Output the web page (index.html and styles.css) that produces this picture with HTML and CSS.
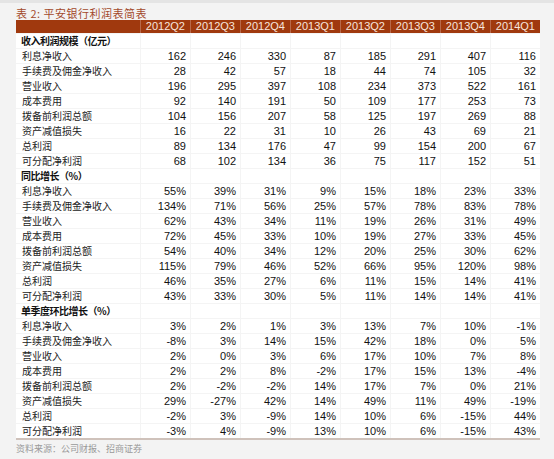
FILE: index.html
```html
<!doctype html>
<html>
<head>
  <link rel="stylesheet" href="styles.css">
</head>
<body>
  <div class="page">
    <div class="title">表 2: 平安银行利润表简表</div>
    <table class="sheet">
      <colgroup>
        <col class="c-label">
        <col><col><col><col><col><col><col><col>
      </colgroup>
      <thead>
        <tr>
          <th class="blank"></th>
          <th>2012Q2</th><th>2012Q3</th><th>2012Q4</th><th>2013Q1</th>
          <th>2013Q2</th><th>2013Q3</th><th>2013Q4</th><th>2014Q1</th>
        </tr>
      </thead>
      <tbody>
        <tr class="group"><td>收入利润规模（亿元）</td><td></td><td></td><td></td><td></td><td></td><td></td><td></td><td></td></tr>
        <tr><td>利息净收入</td><td>162</td><td>246</td><td>330</td><td>87</td><td>185</td><td>291</td><td>407</td><td>116</td></tr>
        <tr><td>手续费及佣金净收入</td><td>28</td><td>42</td><td>57</td><td>18</td><td>44</td><td>74</td><td>105</td><td>32</td></tr>
        <tr><td>营业收入</td><td>196</td><td>295</td><td>397</td><td>108</td><td>234</td><td>373</td><td>522</td><td>161</td></tr>
        <tr><td>成本费用</td><td>92</td><td>140</td><td>191</td><td>50</td><td>109</td><td>177</td><td>253</td><td>73</td></tr>
        <tr><td>拨备前利润总额</td><td>104</td><td>156</td><td>207</td><td>58</td><td>125</td><td>197</td><td>269</td><td>88</td></tr>
        <tr><td>资产减值损失</td><td>16</td><td>22</td><td>31</td><td>10</td><td>26</td><td>43</td><td>69</td><td>21</td></tr>
        <tr><td>总利润</td><td>89</td><td>134</td><td>176</td><td>47</td><td>99</td><td>154</td><td>200</td><td>67</td></tr>
        <tr><td>可分配净利润</td><td>68</td><td>102</td><td>134</td><td>36</td><td>75</td><td>117</td><td>152</td><td>51</td></tr>

        <tr class="group"><td>同比增长（%）</td><td></td><td></td><td></td><td></td><td></td><td></td><td></td><td></td></tr>
        <tr><td>利息净收入</td><td>55%</td><td>39%</td><td>31%</td><td>9%</td><td>15%</td><td>18%</td><td>23%</td><td>33%</td></tr>
        <tr><td>手续费及佣金净收入</td><td>134%</td><td>71%</td><td>56%</td><td>25%</td><td>57%</td><td>78%</td><td>83%</td><td>78%</td></tr>
        <tr><td>营业收入</td><td>62%</td><td>43%</td><td>34%</td><td>11%</td><td>19%</td><td>26%</td><td>31%</td><td>49%</td></tr>
        <tr><td>成本费用</td><td>72%</td><td>45%</td><td>33%</td><td>10%</td><td>19%</td><td>27%</td><td>33%</td><td>45%</td></tr>
        <tr><td>拨备前利润总额</td><td>54%</td><td>40%</td><td>34%</td><td>12%</td><td>20%</td><td>25%</td><td>30%</td><td>62%</td></tr>
        <tr><td>资产减值损失</td><td>115%</td><td>79%</td><td>46%</td><td>52%</td><td>66%</td><td>95%</td><td>120%</td><td>98%</td></tr>
        <tr><td>总利润</td><td>46%</td><td>35%</td><td>27%</td><td>6%</td><td>11%</td><td>15%</td><td>14%</td><td>41%</td></tr>
        <tr><td>可分配净利润</td><td>43%</td><td>33%</td><td>30%</td><td>5%</td><td>11%</td><td>14%</td><td>14%</td><td>41%</td></tr>

        <tr class="group"><td>单季度环比增长（%）</td><td></td><td></td><td></td><td></td><td></td><td></td><td></td><td></td></tr>
        <tr><td>利息净收入</td><td>3%</td><td>2%</td><td>1%</td><td>3%</td><td>13%</td><td>7%</td><td>10%</td><td>-1%</td></tr>
        <tr><td>手续费及佣金净收入</td><td>-8%</td><td>3%</td><td>14%</td><td>15%</td><td>42%</td><td>18%</td><td>0%</td><td>5%</td></tr>
        <tr><td>营业收入</td><td>2%</td><td>0%</td><td>3%</td><td>6%</td><td>17%</td><td>10%</td><td>7%</td><td>8%</td></tr>
        <tr><td>成本费用</td><td>2%</td><td>2%</td><td>8%</td><td>-2%</td><td>17%</td><td>15%</td><td>13%</td><td>-4%</td></tr>
        <tr><td>拨备前利润总额</td><td>2%</td><td>-2%</td><td>-2%</td><td>14%</td><td>17%</td><td>7%</td><td>0%</td><td>21%</td></tr>
        <tr><td>资产减值损失</td><td>29%</td><td>-27%</td><td>42%</td><td>14%</td><td>49%</td><td>11%</td><td>49%</td><td>-19%</td></tr>
        <tr><td>总利润</td><td>-2%</td><td>3%</td><td>-9%</td><td>14%</td><td>10%</td><td>6%</td><td>-15%</td><td>44%</td></tr>
        <tr><td>可分配净利润</td><td>-3%</td><td>4%</td><td>-9%</td><td>13%</td><td>10%</td><td>6%</td><td>-15%</td><td>43%</td></tr>
      </tbody>
    </table>
    <div class="source">资料来源：公司财报、招商证券</div>
  </div>
</body>
</html>
```

FILE: styles.css
```css
body{
  margin: 0;
  background-color: #f3f3f3;
  font-family: "Liberation Sans", "Noto Sans CJK SC", sans-serif;
}
.page{
  border-top: 3px solid #e4e4e4;
  padding: 0 14px 0 16px;
}
.title{
  height: 17px;
  line-height: 20px;
  font-size: 11px;
  color: #a34a2c;
  font-family: "Noto Sans CJK SC", sans-serif;
  letter-spacing: 0.5px;
  overflow: hidden;
}
.sheet{
  width: 524px;
  table-layout: fixed;
  border-collapse: separate;
  border-spacing: 0;
  background-color: #fff;
  border-bottom: 2px solid #cfc2bb;
}
.sheet col{
  width: 50px;
}
.sheet col.c-label{
  width: 124px;
}
.sheet th{
  height: 13px;
  padding: 0 5px 0 0;
  background-color: #a0390e;
  color: #f7e4dc;
  font-size: 11px;
  font-weight: normal;
  text-align: right;
  line-height: 13px;
  border-left: 1px solid #b8684a;
}
.sheet th.blank{
  border-left: none;
}
.sheet td{
  height: 14px;
  padding: 0 4px 0 0;
  font-size: 11px;
  line-height: 14px;
  color: #111;
  text-align: right;
  border-left: 1px solid #f4f4f4;
  border-top: 1px solid #f4f4f4;
  white-space: nowrap;
  overflow: hidden;
}
.sheet td:first-child{
  text-align: left;
  padding-left: 6px;
  border-left: none;
  font-size: 10px;
  color: #222;
  font-family: "Noto Sans CJK SC", sans-serif;
}
.sheet tr.group td:first-child{
  padding-left: 5px;
  font-weight: bold;
  letter-spacing: -0.5px;
  color: #111;
}
.source{
  padding: 2px 0 0 0;
  line-height: 14px;
  font-size: 9px;
  color: #9a9a9a;
  font-family: "Noto Sans CJK SC", sans-serif;
}
```
